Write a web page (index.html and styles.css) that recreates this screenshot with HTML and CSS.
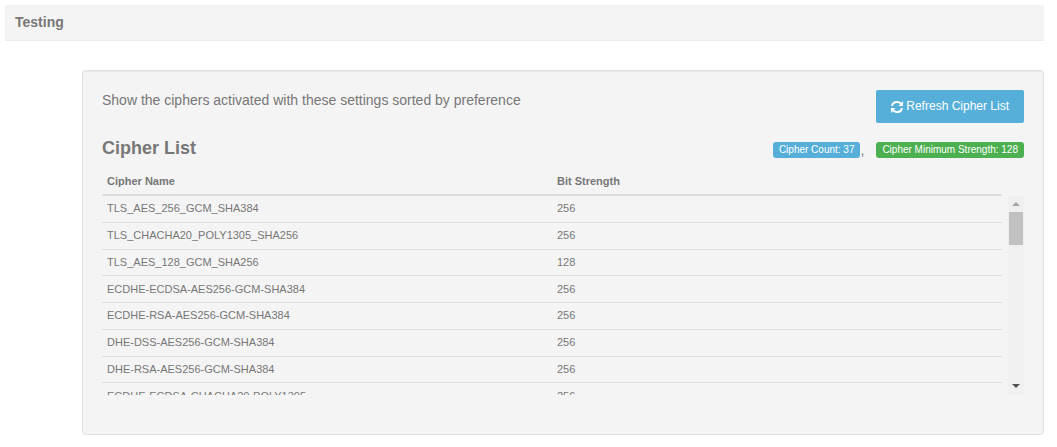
FILE: index.html
```html
<!DOCTYPE html>
<html lang="en">

<head>
    <meta charset="UTF-8">
    <meta name="viewport" content="width=device-width, initial-scale=1.0">
    <title>Testing</title>
    <link rel="stylesheet" href="styles.css">
</head>

<body>
    <header class="section-header">
        <h2 class="section-title">Testing</h2>
    </header>

    <main class="well">
        <div class="toolbar">
            <p class="lead">Show the ciphers activated with these settings sorted by preference</p>
            <button type="button" class="btn">
                <svg class="icon" viewBox="0 0 12 12" aria-hidden="true">
                    <path class="arc" d="M1 5C1.400 2.600 3.500 1 6 1C7.600 1 9 1.600 10 2.600M11 7C10.600 9.400 8.500 11 6 11C4.400 11 3 10.400 2 9.400"/>
                    <path d="M12 0V5H7.500ZM0 12V7H4.500Z"/>
                </svg>
                Refresh Cipher List
            </button>
        </div>

        <div class="list-header">
            <h3 class="list-title">Cipher List</h3>
            <div class="labels">
                <div class="label-group"><span class="label label-info">Cipher Count: 37</span>,</div>
                <span class="label label-success">Cipher Minimum Strength: 128</span>
            </div>
        </div>

        <div class="table-head">
            <table class="table" aria-label="Cipher list columns">
                <thead>
                    <tr>
                        <th scope="col">Cipher Name</th>
                        <th scope="col">Bit Strength</th>
                    </tr>
                </thead>
            </table>
        </div>
        <div class="table-body">
            <div class="table-scroll" tabindex="0">
                <table class="table table-rows" aria-label="Cipher List">
                    <tbody>
                        <tr>
                            <td>TLS_AES_256_GCM_SHA384</td>
                            <td>256</td>
                        </tr>
                        <tr>
                            <td>TLS_CHACHA20_POLY1305_SHA256</td>
                            <td>256</td>
                        </tr>
                        <tr>
                            <td>TLS_AES_128_GCM_SHA256</td>
                            <td>128</td>
                        </tr>
                        <tr>
                            <td>ECDHE-ECDSA-AES256-GCM-SHA384</td>
                            <td>256</td>
                        </tr>
                        <tr>
                            <td>ECDHE-RSA-AES256-GCM-SHA384</td>
                            <td>256</td>
                        </tr>
                        <tr>
                            <td>DHE-DSS-AES256-GCM-SHA384</td>
                            <td>256</td>
                        </tr>
                        <tr>
                            <td>DHE-RSA-AES256-GCM-SHA384</td>
                            <td>256</td>
                        </tr>
                        <tr>
                            <td>ECDHE-ECDSA-CHACHA20-POLY1305</td>
                            <td>256</td>
                        </tr>
                    </tbody>
                </table>
            </div>
            <div class="scrollbar" aria-hidden="true">
                <svg class="scroll-arrow scroll-up" viewBox="0 0 8 4"><path d="M0 4L4 0L8 4Z"/></svg>
                <div class="scroll-thumb"></div>
                <svg class="scroll-arrow scroll-down" viewBox="0 0 8 4"><path d="M0 0L4 4L8 0Z"/></svg>
            </div>
        </div>
    </main>
</body>

</html>
```

FILE: styles.css
```css
* {
    box-sizing: border-box;
}

body {
    margin: 0;
    padding: 5px 13px 12px 5px;
    background-color: #fff;
    color: #777;
    font-family: "Liberation Sans", Arial, sans-serif;
    font-size: 11px;
    line-height: 16px;
}

h2,
h3,
p {
    margin: 0;
}

.section-header {
    padding: 8px 10px 9px;
    background-color: #f4f4f4;
    border-bottom: 1px solid #ebebeb;
}

.section-title {
    font-size: 14px;
    line-height: 18px;
}

.well {
    margin: 29px 0 0 77px;
    padding: 19px 19px 39px;
    background-color: #f4f4f4;
    border: 1px solid #e1e1e1;
    border-radius: 4px;
    box-shadow: inset 0 1px 1px rgba(0, 0, 0, 0.05);
}

.toolbar {
    display: flex;
    justify-content: space-between;
    align-items: flex-start;
}

.lead {
    font-size: 14px;
    line-height: 20px;
}

.btn {
    display: flex;
    align-items: center;
    gap: 3px;
    padding: 8px 15px;
    background-color: #56afd8;
    border: 0;
    border-radius: 2px;
    color: #fff;
    font-family: inherit;
    font-size: 12px;
    line-height: 17px;
    cursor: pointer;
}

.icon {
    width: 12px;
    height: 12px;
    fill: currentColor;
}

.arc {
    fill: none;
    stroke: currentColor;
    stroke-width: 2;
}

.list-header {
    display: flex;
    justify-content: space-between;
    align-items: center;
    margin-top: 13px;
}

.list-title {
    font-size: 18px;
    line-height: 24px;
}

.labels {
    display: flex;
    align-items: center;
    gap: 12px;
    padding-top: 4px;
}

.label-group {
    display: flex;
    font-size: 14px;
}

.label {
    padding: 0 6px;
    border-radius: 3px;
    color: #fff;
    font-size: 10px;
}

.label-info {
    background-color: #56afd8;
}

.label-success {
    background-color: #4caf50;
}

.table-head {
    margin-top: 9px;
    padding-right: 22px;
}

.table-body {
    display: flex;
    gap: 6px;
    height: 199px;
}

.table-scroll {
    flex: 1;
    overflow-y: auto;
    scrollbar-width: none;
}

.table {
    width: 100%;
    table-layout: fixed;
    border-collapse: separate;
    border-spacing: 0;
}

.table-rows {
    height: 214px;
}

th,
td {
    padding: 4px 5px 5px;
    border-bottom: 1px solid #ddd;
    text-align: left;
}

th {
    border-bottom-width: 2px;
}

.scrollbar {
    display: flex;
    flex-direction: column;
    width: 16px;
    padding: 6px 0 7px;
    background-color: #f0f0f0;
}

.scroll-arrow {
    width: 8px;
    height: 4px;
    margin: 0 auto;
}

.scroll-up {
    fill: #a3a3a3;
}

.scroll-down {
    margin-top: auto;
    fill: #505050;
}

.scroll-thumb {
    height: 33px;
    margin: 6px 1px 0;
    background-color: #c1c1c1;
}
```
